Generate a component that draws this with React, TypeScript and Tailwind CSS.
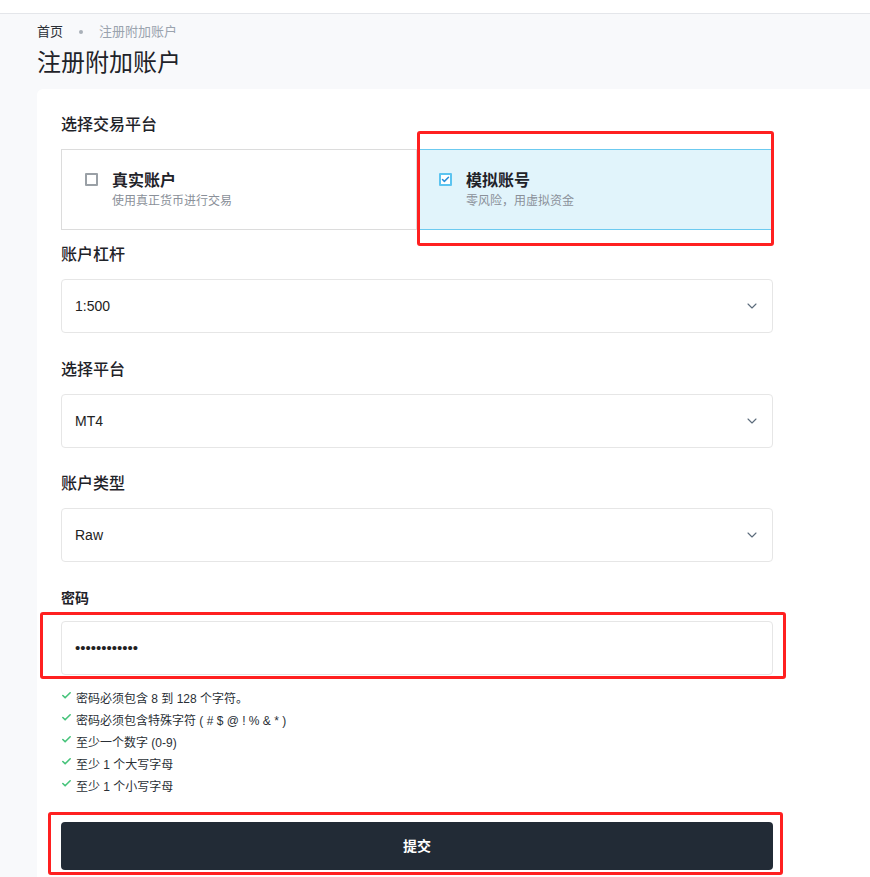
import { ChevronDown, Check } from "lucide-react";

const font = { fontFamily: '"Liberation Sans", "Noto Sans CJK SC", sans-serif' };

function SelectBox({ value }: { value: string }) {
  return (
    <div className="flex h-[54px] w-full items-center justify-between rounded-[4px] border border-[#e6e6e6] bg-white pl-[13px] pr-[12px]">
      <span className="text-[14px] text-[#222]">{value}</span>
      <ChevronDown className="h-[16px] w-[16px] text-[#5b6b7b]" strokeWidth={1.6} />
    </div>
  );
}

function Field({ label, className, children }: { label: string; className: string; children: React.ReactNode }) {
  return (
    <div className={className}>
      <div className="mb-[12px] text-[16px] leading-[24px] font-medium text-[#1f2329]">{label}</div>
      {children}
    </div>
  );
}

const rules = [
  "密码必须包含 8 到 128 个字符。",
  "密码必须包含特殊字符 ( # $ @ ! % & * )",
  "至少一个数字 (0-9)",
  "至少 1 个大写字母",
  "至少 1 个小写字母",
];

export default function App() {
  return (
    <div className="relative min-h-[877px] overflow-hidden bg-[#f8f9fb]" style={font}>
      <div className="h-[14px] border-b border-[#e4e6ea] bg-white" />

      {/* breadcrumb + title */}
      <div className="pl-[37px]">
        <div className="mt-[8px] flex items-center text-[13px] leading-[20px]">
          <span className="text-[#2a2f36]">首页</span>
          <span className="mx-[16px] inline-block h-[4px] w-[4px] rounded-full bg-[#a9b0b8]" />
          <span className="text-[#9aa3ae]">注册附加账户</span>
        </div>
        <h1 className="mt-[5px] text-[24px] leading-[32px] font-normal text-[#1f2329]">注册附加账户</h1>
      </div>

      <div className="ml-[37px] mt-[10px] rounded-tl-[6px] bg-white px-[24px] pt-[24px] pb-[40px]">
        <div className="w-[712px]">
          <Field label="选择交易平台" className="">
            <div className="grid grid-cols-2">
              <div className="flex h-[81px] items-center border border-[#dcdcdc] pl-[23px]">
                <div className="flex items-start">
                  <span className="mt-[3px] h-[13px] w-[13px] rounded-[1px] border-2 border-[#9aa0a6]" />
                  <div className="ml-[14px]">
                    <div className="text-[16px] leading-[22px] font-bold text-[#1f2329]">真实账户</div>
                    <div className="text-[12px] leading-[18px] text-[#8a9099]">使用真正货币进行交易</div>
                  </div>
                </div>
              </div>
              <div className="flex h-[81px] items-center border-y border-[#6ccaf0] bg-[#e1f4fb] pl-[22px]">
                <div className="flex items-start">
                  <span className="mt-[3px] flex h-[13px] w-[13px] items-center justify-center rounded-[1px] border-2 border-[#5cc4f0] bg-white">
                    <Check className="h-[9px] w-[9px] text-[#2a8fd8]" strokeWidth={4} />
                  </span>
                  <div className="ml-[14px]">
                    <div className="text-[16px] leading-[22px] font-bold text-[#1f2329]">模拟账号</div>
                    <div className="text-[12px] leading-[18px] text-[#8a9099]">零风险，用虚拟资金</div>
                  </div>
                </div>
              </div>
            </div>
          </Field>

          <Field label="账户杠杆" className="mt-[13px]">
            <SelectBox value="1:500" />
          </Field>
          <Field label="选择平台" className="mt-[25px]">
            <SelectBox value="MT4" />
          </Field>
          <Field label="账户类型" className="mt-[24px]">
            <SelectBox value="Raw" />
          </Field>

          <div className="mt-[26px]">
            <div className="mb-[13px] text-[14px] leading-[20px] font-bold text-[#1f2329]">密码</div>
            <div className="flex h-[54px] items-center rounded-[4px] border border-[#e6e6e6] bg-white pl-[13px]">
              <span className="text-[15px] text-[#222]">••••••••••••</span>
            </div>
          </div>

          <ul className="mt-[13px]">
            {rules.map((r) => (
              <li key={r} className="flex h-[22px] items-center text-[12px] text-[#2a2f36]">
                <Check className="mr-[4px] -mt-[7px] h-[11px] w-[11px] text-[#45c37a]" strokeWidth={3.5} />
                {r}
              </li>
            ))}
          </ul>

          <button className="mt-[24px] flex h-[48px] w-full items-center justify-center rounded-[4px] bg-[#222b36] text-[14px] font-bold text-white">
            提交
          </button>
        </div>
      </div>

      {/* red annotation boxes */}
      <div className="pointer-events-none absolute left-[417px] top-[131px] h-[115px] w-[357px] rounded-[3px] border-[3px] border-[#ff2020]" />
      <div className="pointer-events-none absolute left-[40px] top-[612px] h-[67px] w-[746px] rounded-[3px] border-[3px] border-[#ff2020]" />
      <div className="pointer-events-none absolute left-[48px] top-[812px] h-[63px] w-[735px] rounded-[3px] border-[3px] border-[#ff2020]" />
    </div>
  );
}
